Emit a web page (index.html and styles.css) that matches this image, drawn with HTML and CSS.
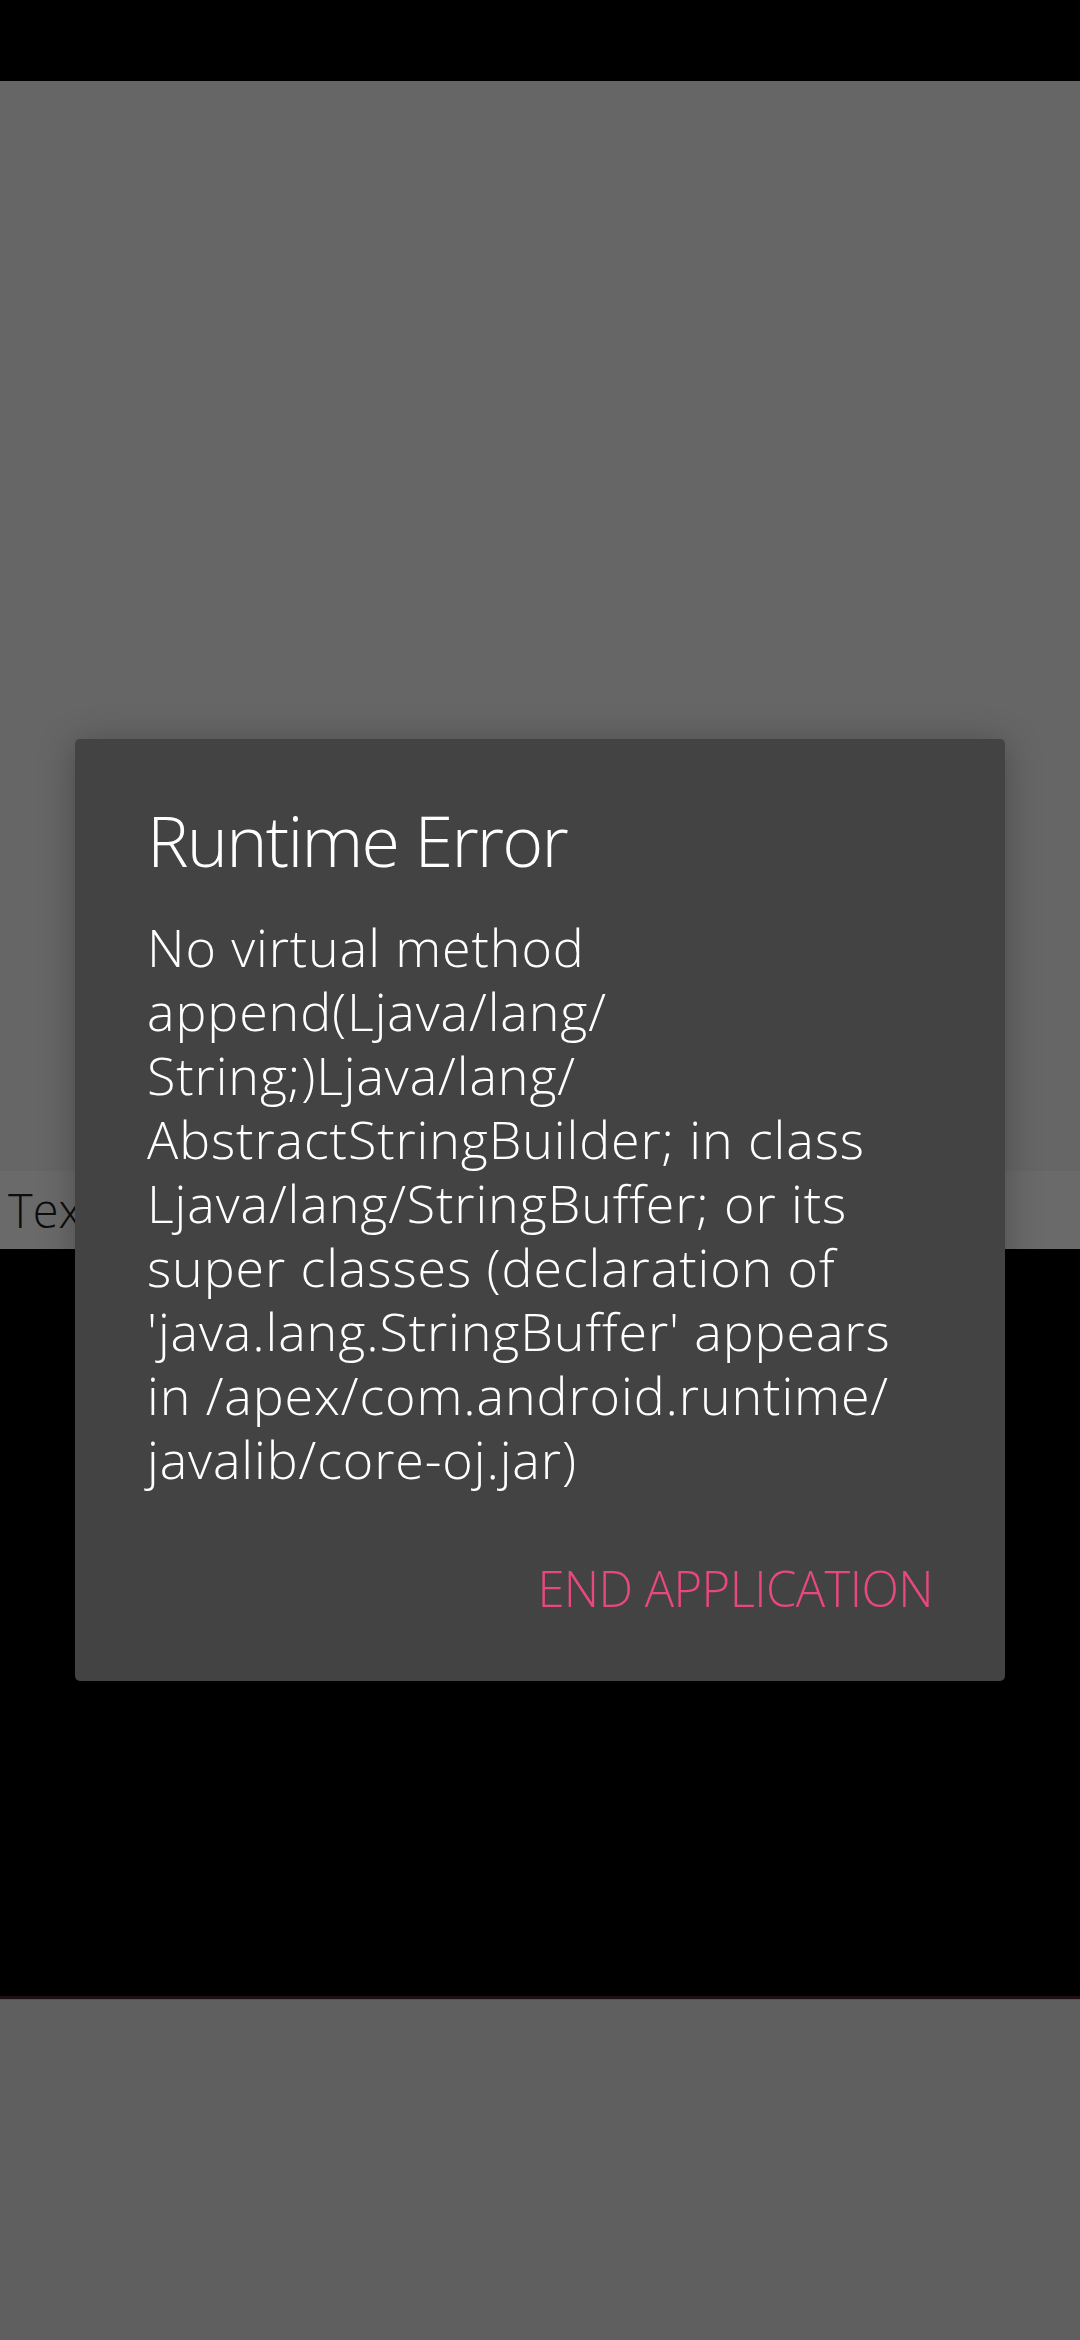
FILE: index.html
```html
<!DOCTYPE html>
<html>
<head>
<meta charset="utf-8">
<link rel="stylesheet" href="styles.css">
</head>
<body>
<div class="screen">
  <div class="status"></div>
  <div class="app">
    <div class="app-top"></div>
    <div class="strip"><span class="strip-text">TextView</span></div>
  </div>
  <div class="black"></div>
  <div class="divider"></div>
  <div class="bottom"></div>
  <div class="dialog">
    <div class="title">Runtime Error</div>
    <div class="message">No virtual method<br>append(Ljava/lang/<br>String;)Ljava/lang/<br>AbstractStringBuilder; in class<br>Ljava/lang/StringBuffer; or its<br>super classes (declaration of<br>'java.lang.StringBuffer' appears<br>in /apex/com.android.runtime/<br>javalib/core-oj.jar)</div>
    <div class="actions"><span class="btn">END APPLICATION</span></div>
  </div>
</div>
</body>
</html>
```

FILE: styles.css
```css
html, body {
  margin: 0;
  padding: 0;
  background: #000;
}
.screen {
  position: relative;
  width: 1080px;
  height: 2340px;
  display: flex;
  flex-direction: column;
  overflow: hidden;
  font-family: "Open Sans", "Noto Sans", sans-serif;
}
.status {
  height: 81px;
  background: #000;
}
.app {
  display: flex;
  flex-direction: column;
}
.app-top {
  height: 1090px;
  background: #666666;
}
.strip {
  height: 78px;
  background: #6a6a6a;
  overflow: hidden;
  display: flex;
  align-items: center;
}
.strip-text {
  font-weight: 300;
  font-size: 47px;
  color: #0d0d0d;
  padding-left: 8px;
  line-height: 78px;
}
.black {
  height: 747px;
  background: #000;
}
.divider {
  height: 3px;
  background: #1e0f17;
  border-bottom: 1px solid #5e4d57;
}
.bottom {
  flex: 1;
  background: #5f5f5f;
}
.dialog {
  position: absolute;
  left: 75px;
  top: 739px;
  width: 930px;
  height: 942px;
  box-sizing: border-box;
  padding: 61px 72px 0 72px;
  background: #434343;
  border-radius: 5px;
  box-shadow: 0 4px 36px rgba(0, 0, 0, 0.28);
  color: #ffffff;
  display: flex;
  flex-direction: column;
}
.title {
  font-weight: 300;
  font-size: 70px;
  line-height: 80px;
  letter-spacing: -1.8px;
}
.message {
  margin-top: 35px;
  font-weight: 300;
  font-size: 52px;
  line-height: 64px;
  letter-spacing: 0.9px;
  white-space: nowrap;
}
.actions {
  margin-top: 67px;
  display: flex;
  justify-content: flex-end;
}
.btn {
  font-weight: 300;
  font-size: 49px;
  line-height: 60px;
  letter-spacing: -0.6px;
  color: #e6487f;
}
```
